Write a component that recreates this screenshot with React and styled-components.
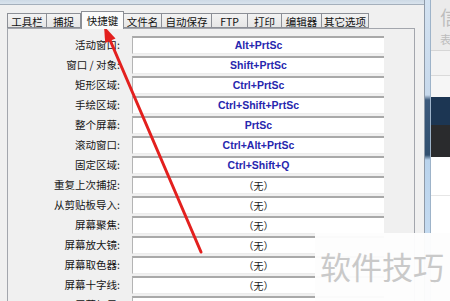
import React from "react";
import styled, { createGlobalStyle } from "styled-components";

const Global = createGlobalStyle`
  html, body { margin: 0; padding: 0; background: #ffffff; }
  body { width: 450px; height: 301px; overflow: hidden; font-family: "Noto Sans CJK SC", "Noto Sans", sans-serif; }
`;

const Screen = styled.div`
  position: relative;
  width: 450px;
  height: 301px;
  overflow: hidden;
  display: flex;
`;

const Dialog = styled.div`
  width: 424px;
  flex: none;
  display: flex;
  flex-direction: column;
  border-right: 1px solid #8e9aa8;
  background: #f0f0f0;
`;

const Glass = styled.div`
  height: 4px;
  flex: none;
  background: linear-gradient(to bottom, #cdd9e5, #d9e3ed);
  border-bottom: 1px solid #a4afbb;
`;

const Body = styled.div`
  flex: 1;
  padding: 6px 0 0 7px;
  display: flex;
  flex-direction: column;
`;

const TabStrip = styled.div`
  display: flex;
  align-items: flex-end;
  height: 17px;
  position: relative;
  z-index: 1;
`;

const Tab = styled.div`
  box-sizing: border-box;
  width: ${(p) => p.$w}px;
  height: ${(p) => (p.$active ? 18 : 15)}px;
  margin-bottom: ${(p) => (p.$active ? -1 : 0)}px;
  border: 1px solid #8c8f96;
  border-bottom: ${(p) => (p.$active ? "none" : "1px solid #8c8f96")};
  border-left: ${(p) => (p.$first || p.$active ? "1px solid #8c8f96" : "none")};
  background: ${(p) =>
    p.$active ? "#fbfbfb" : "linear-gradient(to bottom, #f3f3f3, #e6e6e6)"};
  font-size: 10.5px;
  line-height: ${(p) => (p.$active ? 15 : 14)}px;
  padding-top: ${(p) => (p.$active ? 1 : 1)}px;
  color: #111;
  text-align: center;
  white-space: nowrap;
  font-family: "Noto Sans CJK SC", "Noto Sans", sans-serif;
`;

const Panel = styled.div`
  width: 408px;
  box-sizing: border-box;
  flex: 1;
  border: 1px solid #a3a6ad;
  border-bottom: none;
  background: #f0f0f0;
  padding-top: 7px;
  display: flex;
  flex-direction: column;
  gap: 2px;
`;

const Row = styled.div`
  display: grid;
  grid-template-columns: 112px 252px;
  column-gap: 12px;
  height: 18px;
  flex: none;
`;

const Label = styled.div`
  text-align: right;
  font-size: 10.5px;
  line-height: 18px;
  color: #151515;
  white-space: nowrap;
  font-family: "Noto Sans CJK SC", "Noto Sans", sans-serif;
`;

const Field = styled.div`
  box-sizing: border-box;
  height: 18px;
  background: #ffffff;
  border-top: 2px solid #a9a9a9;
  border-left: 1px solid #b4b4b4;
  border-bottom: 1px solid #ececec;
  text-align: center;
  line-height: 15px;
  white-space: nowrap;
  color: ${(p) => (p.$key ? "#2626ae" : "#1a1a1a")};
  font-weight: ${(p) => (p.$key ? 700 : 400)};
  font-size: ${(p) => (p.$key ? "10.5px" : "10px")};
  font-family: ${(p) =>
    p.$key
      ? '"Liberation Sans", Arial, sans-serif'
      : '"Noto Sans CJK SC", "Noto Sans", sans-serif'};
`;

const Frame = styled.div`
  width: 5px;
  flex: none;
  background: linear-gradient(
    to bottom,
    #d3e2f1 0px,
    #c7d9ec 95px,
    #3c5a7c 100px,
    #31506f 155px,
    #b9d3ec 160px,
    #cfe2f5 301px
  );
  border-right: 1px solid #9db3c9;
`;

const OtherWindow = styled.div`
  flex: 1;
  display: flex;
  flex-direction: column;
  overflow: hidden;
  background: #ffffff;
`;

const OtherHeader = styled.div`
  height: 50px;
  flex: none;
  background: #ebebeb;
  border-bottom: 1px solid #d6d6d6;
  padding-left: 9px;
  overflow: hidden;
  display: flex;
  flex-direction: column;
`;

const OtherBig = styled.div`
  font-size: 19px;
  line-height: 22px;
  margin-top: 6px;
  color: #bdbdbd;
  font-weight: 400;
  white-space: nowrap;
  font-family: "Noto Sans CJK SC", sans-serif;
`;

const OtherSmall = styled.div`
  font-size: 11px;
  line-height: 14px;
  margin-top: 4px;
  color: #bcbcbc;
  white-space: nowrap;
  font-family: "Noto Sans CJK SC", sans-serif;
`;

const Strip = styled.div`
  height: ${(p) => p.$h}px;
  flex: none;
  background: ${(p) => p.$bg};
  border-bottom: ${(p) => (p.$line ? `1px solid ${p.$line}` : "none")};
`;

const Arrow = styled.svg`
  position: absolute;
  left: 0;
  top: 0;
  pointer-events: none;
`;

const Watermark = styled.div`
  position: absolute;
  left: 315px;
  top: 233px;
  right: 0;
  bottom: 0;
  background: rgba(253, 253, 253, 0.97);
  padding: 17px 0 0 5px;
  font-size: 31px;
  line-height: 31px;
  color: #c9c9c9;
  white-space: nowrap;
  font-family: "Noto Sans CJK SC", sans-serif;
`;

const tabs = [
  ["工具栏", 40],
  ["捕捉", 34],
  ["快捷键", 43, true],
  ["文件名", 38],
  ["自动保存", 50],
  ["FTP", 36],
  ["打印", 34],
  ["编辑器", 40],
  ["其它选项", 47],
];

const rows = [
  ["活动窗口:", "Alt+PrtSc"],
  ["窗口 / 对象:", "Shift+PrtSc"],
  ["矩形区域:", "Ctrl+PrtSc"],
  ["手绘区域:", "Ctrl+Shift+PrtSc"],
  ["整个屏幕:", "PrtSc"],
  ["滚动窗口:", "Ctrl+Alt+PrtSc"],
  ["固定区域:", "Ctrl+Shift+Q"],
  ["重复上次捕捉:", null],
  ["从剪贴板导入:", null],
  ["屏幕聚焦:", null],
  ["屏幕放大镜:", null],
  ["屏幕取色器:", null],
  ["屏幕十字线:", null],
  ["屏幕标尺:", null],
];

export default function App() {
  return (
    <>
      <Global />
      <Screen>
        <Dialog>
          <Glass />
          <Body>
            <TabStrip>
              {tabs.map(([t, w, a], i) => (
                <Tab key={t} $w={w} $active={a} $first={i === 0}>
                  {t}
                </Tab>
              ))}
            </TabStrip>
            <Panel>
              {rows.map(([l, k]) => (
                <Row key={l}>
                  <Label>{l}</Label>
                  <Field $key={!!k}>{k || "（无）"}</Field>
                </Row>
              ))}
            </Panel>
          </Body>
        </Dialog>
        <Frame />
        <OtherWindow>
          <OtherHeader>
            <OtherBig>信</OtherBig>
            <OtherSmall>表</OtherSmall>
          </OtherHeader>
          <Strip $h={24} $bg="#f3f3f3" $line="#dadada" />
          <Strip $h={21} $bg="#f6f6f6" />
          <Strip $h={28} $bg="#1c3653" />
          <Strip $h={32} $bg="#2a2b2d" />
          <Strip $h={38} $bg="#ffffff" $line="#e6e6e6" />
        </OtherWindow>
        <Arrow width="450" height="301" viewBox="0 0 450 301">
          <line
            x1="201"
            y1="252"
            x2="110"
            y2="40"
            stroke="#e3201e"
            strokeWidth="3"
            strokeLinecap="round"
          />
          <polygon points="104,26 115.5,38.5 105.2,43" fill="#e3201e" />
        </Arrow>
        <Watermark>软件技巧</Watermark>
      </Screen>
    </>
  );
}
